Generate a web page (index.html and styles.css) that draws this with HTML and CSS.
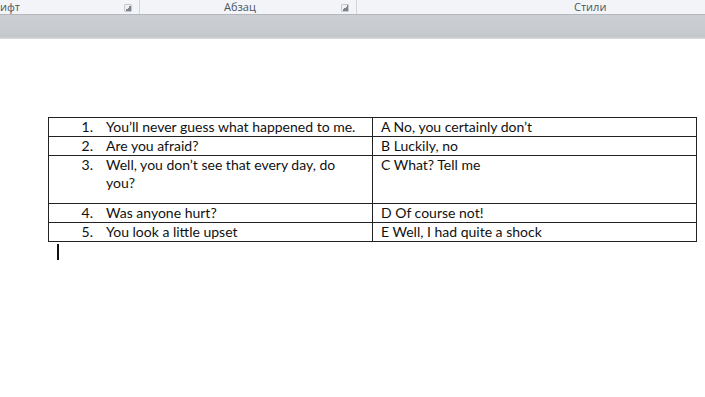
FILE: index.html
```html
<!DOCTYPE html>
<html lang="ru">
<head>
<meta charset="utf-8">
<link rel="stylesheet" href="styles.css">
</head>
<body>
<div class="ribbon">
  <div class="group g-font"><span class="label">ифт</span><span class="launch"></span></div>
  <div class="group g-para"><span class="label">Абзац</span><span class="launch"></span></div>
  <div class="group g-styles"><span class="label">Стили</span></div>
</div>
<div class="band"></div>
<div class="page">
  <table class="match">
    <tr><td class="q"><div class="item"><span class="num">1.</span><span class="txt">You’ll never guess what happened to me.</span></div></td><td class="a">A No, you certainly don’t</td></tr>
    <tr><td class="q"><div class="item"><span class="num">2.</span><span class="txt">Are you afraid?</span></div></td><td class="a">B Luckily, no</td></tr>
    <tr class="tall"><td class="q"><div class="item"><span class="num">3.</span><span class="txt">Well, you don’t see that every day, do you?</span></div></td><td class="a">C What? Tell me</td></tr>
    <tr><td class="q"><div class="item"><span class="num">4.</span><span class="txt">Was anyone hurt?</span></div></td><td class="a">D Of course not!</td></tr>
    <tr><td class="q"><div class="item"><span class="num">5.</span><span class="txt">You look a little upset</span></div></td><td class="a">E Well, I had quite a shock</td></tr>
  </table>
  <div class="caret"></div>
</div>
</body>
</html>
```
FILE: styles.css
```css
html, body { margin: 0; padding: 0; background: #fff; }
body { width: 705px; height: 397px; overflow: hidden; font-family: "Open Sans", "Liberation Sans", sans-serif; }

.ribbon {
  display: flex;
  height: 14px;
  background: #f2f4f7;
  border-bottom: 1px solid #b4b8be;
  font-family: "Open Sans", "DejaVu Sans", sans-serif;
  font-size: 11px;
  color: #4a5563;
  line-height: 13px;
}
.group { display: flex; align-items: flex-start; border-right: 1px solid #d2d5da; box-sizing: border-box; }
.g-font { width: 140px; }
.g-font .label { flex: 1; }
.g-para { width: 217px; }
.g-para .label { flex: 1; padding-left: 84px; }
.g-styles { flex: 1; border-right: none; }
.g-styles .label { padding-left: 217px; }
.launch {
  width: 6px; height: 6px; margin: 4px 7px 0 0;
  border: 1px solid #c4c8ce; border-radius: 1px;
  background: linear-gradient(135deg, #eef0f3 50%, #7c838c 50%);
}

.band {
  height: 24px;
  background: linear-gradient(#cbced2, #c7cace 75%, #c2c5c9 90%, #dcdee0);
}

.page { padding: 78px 0 0 48px; }

.match {
  border-collapse: collapse;
  width: 649px;
  table-layout: fixed;
  font-family: "Lato", "Open Sans", sans-serif;
  font-size: 14px;
  color: #111;
}
.match td { border: 1px solid #222; padding: 0; vertical-align: top; height: 18px; line-height: 18px; }
.match .q { width: 323px; }
.item { display: flex; }
.item .num { width: 44px; text-align: right; padding-right: 13px; flex: none; }
.item .txt { width: 254px; flex: none; }
.match .a { padding-left: 8px; }
.match tr.tall td { height: 47px; }

.caret { width: 2px; height: 16px; background: #111; margin: 2px 0 0 9px; }
```
